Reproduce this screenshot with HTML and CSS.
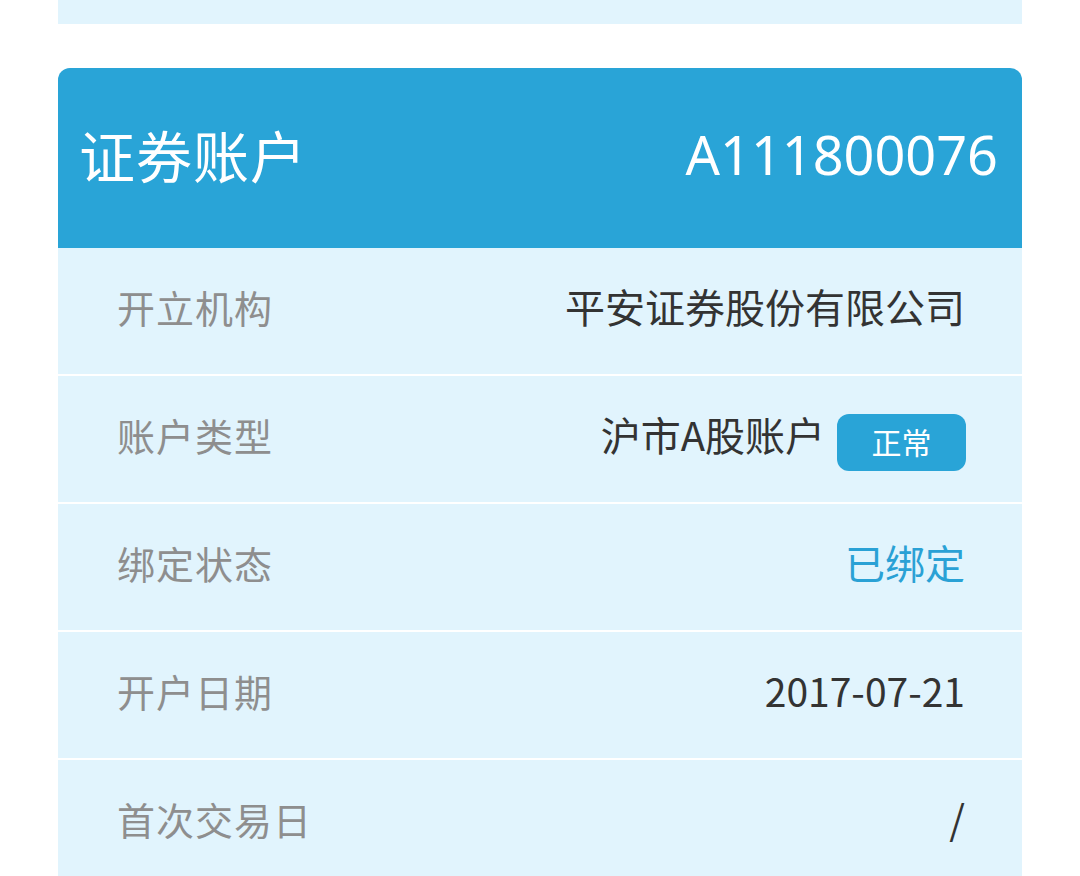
FILE: index.html
```html
<!DOCTYPE html>
<html lang="zh-CN">
<head>
<meta charset="utf-8">
<title>证券账户</title>
<link rel="stylesheet" href="styles.css">
</head>
<body>
<div class="page">
  <div class="prev-card"></div>
  <div class="card">
    <div class="card-head">
      <div class="head-title">证券账户</div>
      <div class="head-no">A111800076</div>
    </div>
    <div class="row">
      <div class="label">开立机构</div>
      <div class="value">平安证券股份有限公司</div>
    </div>
    <div class="row">
      <div class="label">账户类型</div>
      <div class="value-with-badge"><span class="value">沪市A股账户</span><span class="badge">正常</span></div>
    </div>
    <div class="row">
      <div class="label">绑定状态</div>
      <div class="value value-blue">已绑定</div>
    </div>
    <div class="row">
      <div class="label">开户日期</div>
      <div class="value value-date">2017-07-21</div>
    </div>
    <div class="row">
      <div class="label">首次交易日</div>
      <div class="value">/</div>
    </div>
  </div>
</div>
</body>
</html>
```
FILE: styles.css
```css
html, body {
  margin: 0;
  padding: 0;
  background: #ffffff;
}
body {
  font-family: "Noto Sans CJK SC", "Noto Sans", sans-serif;
  width: 1080px;
  height: 876px;
  overflow: hidden;
}
.page {
  padding: 0 58px;
  display: flex;
  flex-direction: column;
  gap: 44px;
}
.prev-card {
  height: 24px;
  background: #e1f4fd;
}
.card {
  background: #e1f4fd;
  border-radius: 12px 12px 0 0;
  overflow: hidden;
}
.card-head {
  height: 180px;
  background: #29a4d7;
  display: flex;
  align-items: center;
  justify-content: space-between;
  padding: 0 24px 0 21px;
  color: #ffffff;
  box-sizing: border-box;
}
.head-title {
  font-size: 56px;
  letter-spacing: 1px;
  padding-bottom: 10px;
}
.head-no {
  font-family: "Noto Sans", sans-serif;
  font-size: 54px;
  padding-bottom: 8px;
}
.row {
  height: 126px;
  border-bottom: 2px solid #ffffff;
  display: flex;
  align-items: center;
  justify-content: space-between;
  padding: 0 57px 0 59px;
}
.label {
  font-size: 38px;
  color: #8e8e8e;
  letter-spacing: 1px;
  padding-bottom: 10px;
}
.value {
  font-size: 40px;
  color: #333333;
  padding-bottom: 10px;
}
.value-date {
  font-size: 39px;
}
.value-with-badge {
  display: flex;
  align-items: center;
  gap: 12px;
  margin-right: -1px;
}
.badge {
  display: inline-flex;
  align-items: center;
  justify-content: center;
  width: 129px;
  height: 57px;
  margin-top: 6px;
  padding-bottom: 3px;
  box-sizing: border-box;
  border-radius: 12px;
  background: #29a4d7;
  color: #ffffff;
  font-size: 30px;
}
.value-blue {
  color: #2aa1d5;
}
```
